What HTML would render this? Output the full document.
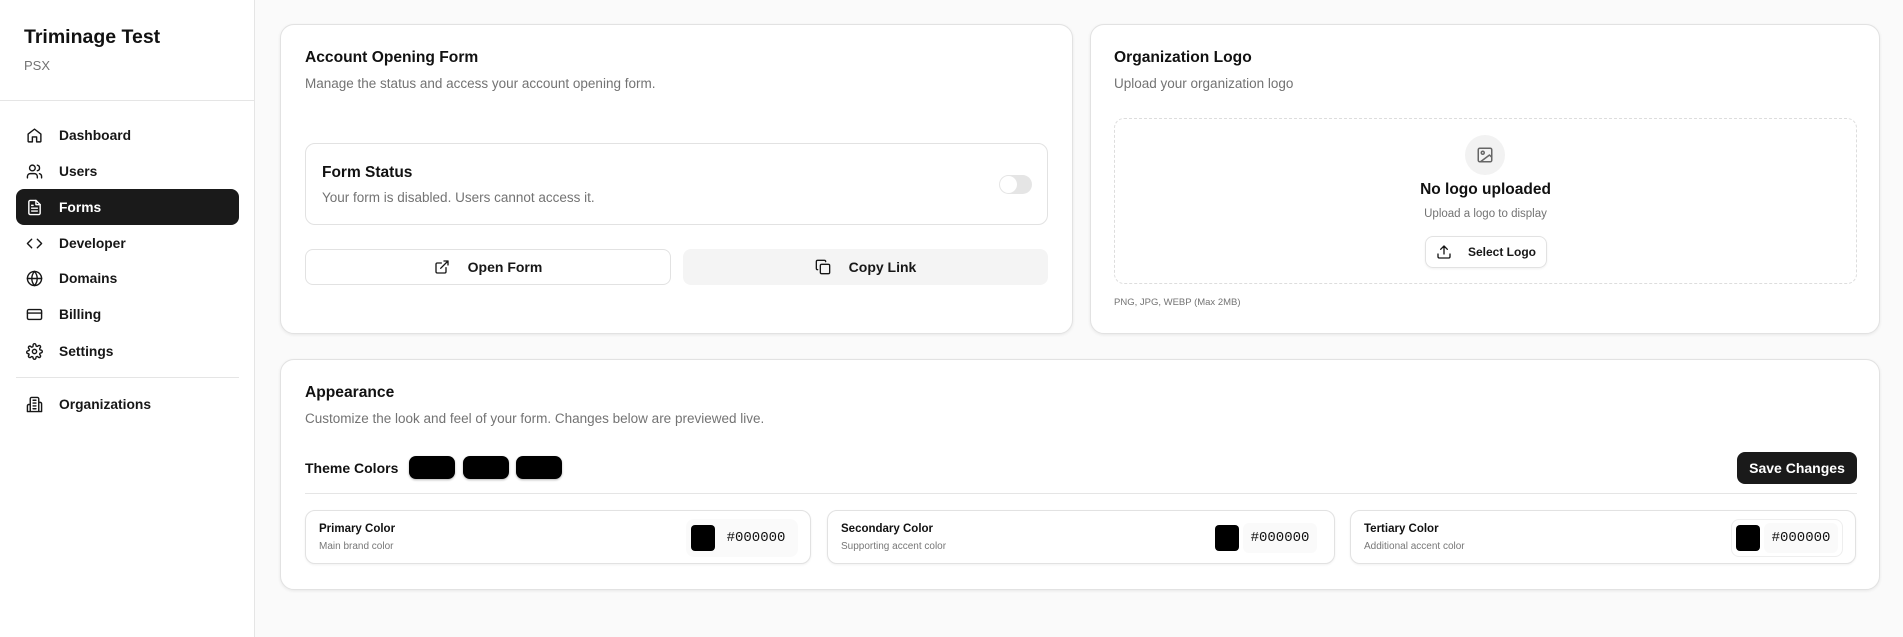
<!DOCTYPE html>
<html><head><style>
*{box-sizing:border-box;margin:0;padding:0}
body{width:1903px;height:637px;overflow:hidden;background:#fafafa;font-family:"Liberation Sans",sans-serif;color:#111;position:relative}
.abs{position:absolute}
.side{left:0;top:0;width:255px;height:637px;background:#fff;border-right:1px solid #e5e5e5}
.nav{position:absolute;left:16px;width:223px;height:36px;border-radius:8px;display:flex;align-items:center;font-size:13.8px;font-weight:bold;color:#171717}
.nav svg{margin-left:10px;margin-right:16px;width:17px;height:17px;fill:none;stroke:currentColor;stroke-width:2;stroke-linecap:round;stroke-linejoin:round}
.nav.act{background:#1a1a1a;color:#fff}
.card{position:absolute;background:#fff;border:1px solid #e2e2e2;border-radius:14px;box-shadow:0 1px 3px rgba(0,0,0,.08)}
.h{font-size:15.6px;font-weight:bold;color:#111}
.sub{font-size:13.5px;color:#737373}
.btn{position:absolute;border-radius:8px;display:flex;align-items:center;justify-content:center;font-size:14px;font-weight:bold;color:#171717}
.btn svg{width:16px;height:16px;fill:none;stroke:#171717;stroke-width:2;stroke-linecap:round;stroke-linejoin:round;margin-right:18px}
.cc{position:absolute;top:510px;height:54px;border:1px solid #e2e2e2;border-radius:10px;background:#fff;box-shadow:0 1px 2px rgba(0,0,0,.06)}
.cc .l{position:absolute;left:13px;top:12px;font-size:11.5px;font-weight:bold}
.cc .s{position:absolute;left:13px;top:30px;font-size:10px;color:#777}
.cc .pick{position:absolute;right:12px;top:8px;height:38px;width:112px;border:1px solid #eee;border-radius:8px}
.cc .sw{position:absolute;left:4px;top:5px;width:24px;height:26px;background:#000;border-radius:4px}
.cc .hex{position:absolute;left:32px;top:3px;width:74px;height:30px;background:#fafafa;border-radius:6px;font-family:"Liberation Mono",monospace;font-size:14px;line-height:30px;text-align:center}
.ts{position:absolute;top:456px;width:46px;height:23px;background:#000;border-radius:7px;box-shadow:0 1px 2px rgba(0,0,0,.3)}
</style></head><body>
<div class="abs side">
 <div class="abs" style="left:24px;top:26px;font-size:19.5px;font-weight:bold">Triminage Test</div>
 <div class="abs" style="left:24px;top:58px;font-size:13px;color:#737373">PSX</div>
 <div class="abs" style="left:0;top:100px;width:254px;height:1px;background:#e5e5e5"></div>
 <div class="nav" style="top:117px"><svg viewBox="0 0 24 24"><path d="M3 10l9-7 9 7v10a1 1 0 0 1-1 1h-5v-7H9v7H4a1 1 0 0 1-1-1z"/></svg>Dashboard</div>
 <div class="nav" style="top:153px"><svg viewBox="0 0 24 24"><circle cx="9" cy="7" r="4"/><path d="M2 21v-2a4 4 0 0 1 4-4h6a4 4 0 0 1 4 4v2M16 3.1a4 4 0 0 1 0 7.8M22 21v-2a4 4 0 0 0-3-3.9"/></svg>Users</div>
 <div class="nav act" style="top:189px"><svg viewBox="0 0 24 24"><path d="M14 2H6a2 2 0 0 0-2 2v16a2 2 0 0 0 2 2h12a2 2 0 0 0 2-2V8z"/><path d="M14 2v6h6M16 13H8M16 17H8M10 9H8"/></svg>Forms</div>
 <div class="nav" style="top:225px"><svg viewBox="0 0 24 24"><path d="M16 18l6-6-6-6M8 6l-6 6 6 6"/></svg>Developer</div>
 <div class="nav" style="top:260px"><svg viewBox="0 0 24 24"><circle cx="12" cy="12" r="10"/><path d="M2 12h20M12 2a15 15 0 0 1 0 20 15 15 0 0 1 0-20"/></svg>Domains</div>
 <div class="nav" style="top:296px"><svg viewBox="0 0 24 24"><rect x="2" y="5" width="20" height="14" rx="2"/><path d="M2 10h20"/></svg>Billing</div>
 <div class="nav" style="top:333px"><svg viewBox="0 0 24 24"><circle cx="12" cy="12" r="3"/><path d="M19.4 15a1.7 1.7 0 0 0 .3 1.8l.1.1a2 2 0 1 1-2.8 2.8l-.1-.1a1.7 1.7 0 0 0-2.9 1.2V21a2 2 0 1 1-4 0v-.1a1.7 1.7 0 0 0-2.9-1.2l-.1.1a2 2 0 1 1-2.8-2.8l.1-.1A1.7 1.7 0 0 0 3 15H3a2 2 0 1 1 0-4h.1a1.7 1.7 0 0 0 1.2-2.9l-.1-.1A2 2 0 1 1 7 5.2l.1.1A1.7 1.7 0 0 0 10 4.1V3a2 2 0 1 1 4 0v.1a1.7 1.7 0 0 0 2.9 1.2l.1-.1a2 2 0 1 1 2.8 2.8l-.1.1a1.7 1.7 0 0 0 1.2 2.9H21a2 2 0 1 1 0 4h-.1a1.7 1.7 0 0 0-1.5 1z"/></svg>Settings</div>
 <div class="abs" style="left:16px;top:377px;width:223px;height:1px;background:#e5e5e5"></div>
 <div class="nav" style="top:386px"><svg viewBox="0 0 24 24"><path d="M6 22V4a2 2 0 0 1 2-2h8a2 2 0 0 1 2 2v18zM6 12H4a2 2 0 0 0-2 2v8h4M18 9h2a2 2 0 0 1 2 2v11h-4M10 6h4M10 10h4M10 14h4M10 18h4"/></svg>Organizations</div>
</div>

<div class="card" style="left:280px;top:24px;width:793px;height:310px">
 <div class="abs h" style="left:24px;top:24px">Account Opening Form</div>
 <div class="abs sub" style="left:24px;top:51px">Manage the status and access your account opening form.</div>
 <div class="abs" style="left:24px;top:118px;width:743px;height:82px;border:1px solid #e2e2e2;border-radius:10px">
  <div class="abs" style="left:16px;top:20px;font-size:15.5px;font-weight:bold">Form Status</div>
  <div class="abs sub" style="left:16px;top:46px">Your form is disabled. Users cannot access it.</div>
  <div class="abs" style="left:693px;top:31px;width:33px;height:19px;border-radius:10px;background:#e5e5e5"><div class="abs" style="left:1px;top:1px;width:17px;height:17px;border-radius:50%;background:#fff"></div></div>
 </div>
 <div class="btn" style="left:24px;top:224px;width:366px;height:36px;border:1px solid #e2e2e2"><svg viewBox="0 0 24 24"><path d="M15 3h6v6M10 14L21 3M18 13v6a2 2 0 0 1-2 2H5a2 2 0 0 1-2-2V8a2 2 0 0 1 2-2h6"/></svg>Open Form</div>
 <div class="btn" style="left:402px;top:224px;width:365px;height:36px;background:#f4f4f4"><svg viewBox="0 0 24 24"><rect x="8" y="8" width="14" height="14" rx="2"/><path d="M4 16a2 2 0 0 1-2-2V4a2 2 0 0 1 2-2h10a2 2 0 0 1 2 2"/></svg>Copy Link</div>
</div>

<div class="card" style="left:1090px;top:24px;width:790px;height:310px">
 <div class="abs h" style="left:23px;top:24px">Organization Logo</div>
 <div class="abs sub" style="left:23px;top:51px">Upload your organization logo</div>
 <div class="abs" style="left:23px;top:93px;width:743px;height:166px;border:1px dashed #ddd;border-radius:10px">
  <div class="abs" style="left:350px;top:16px;width:40px;height:40px;border-radius:50%;background:#f2f2f2;display:flex;align-items:center;justify-content:center"><svg width="18" height="18" viewBox="0 0 24 24" fill="none" stroke="#666" stroke-width="2" stroke-linecap="round" stroke-linejoin="round"><rect x="3" y="3" width="18" height="18" rx="2"/><circle cx="9" cy="9" r="2"/><path d="M21 15l-3-3L6 21"/></svg></div>
  <div class="abs" style="left:0;width:100%;top:62px;text-align:center;font-size:15.5px;font-weight:bold">No logo uploaded</div>
  <div class="abs" style="left:0;width:100%;top:89px;text-align:center;font-size:11.5px;color:#737373">Upload a logo to display</div>
  <div class="btn" style="left:310px;top:117px;width:122px;height:32px;border:1px solid #e2e2e2;font-size:12px;box-shadow:0 1px 2px rgba(0,0,0,.06)"><svg viewBox="0 0 24 24" style="margin-right:16px"><path d="M21 15v4a2 2 0 0 1-2 2H5a2 2 0 0 1-2-2v-4M17 8l-5-5-5 5M12 3v12"/></svg>Select Logo</div>
 </div>
 <div class="abs" style="left:23px;top:272px;font-size:9.5px;color:#737373">PNG, JPG, WEBP (Max 2MB)</div>
</div>

<div class="card" style="left:280px;top:359px;width:1600px;height:231px">
 <div class="abs h" style="left:24px;top:24px">Appearance</div>
 <div class="abs sub" style="left:24px;top:51px">Customize the look and feel of your form. Changes below are previewed live.</div>
 <div class="abs" style="left:24px;top:100px;font-size:14px;font-weight:bold">Theme Colors</div>
 <div class="abs" style="left:24px;top:133px;width:1552px;height:1px;background:#e5e5e5"></div>
 <div class="btn" style="left:1456px;top:92px;width:120px;height:32px;background:#1a1a1a;color:#fff;font-size:14px">Save Changes</div>
</div>
<div class="ts" style="left:409px"></div><div class="ts" style="left:463px"></div><div class="ts" style="left:516px"></div>
<div class="cc" style="left:305px;width:506px"><div class="l">Primary Color</div><div class="s">Main brand color</div><div class="pick" style="border-color:transparent;background:#fafafa"><div class="sw"></div><div class="hex">#000000</div></div></div>
<div class="cc" style="left:827px;width:508px"><div class="l">Secondary Color</div><div class="s">Supporting accent color</div><div class="pick" style="border-color:transparent"><div class="sw"></div><div class="hex">#000000</div></div></div>
<div class="cc" style="left:1350px;width:506px"><div class="l">Tertiary Color</div><div class="s">Additional accent color</div><div class="pick"><div class="sw"></div><div class="hex">#000000</div></div></div>
</body></html>
